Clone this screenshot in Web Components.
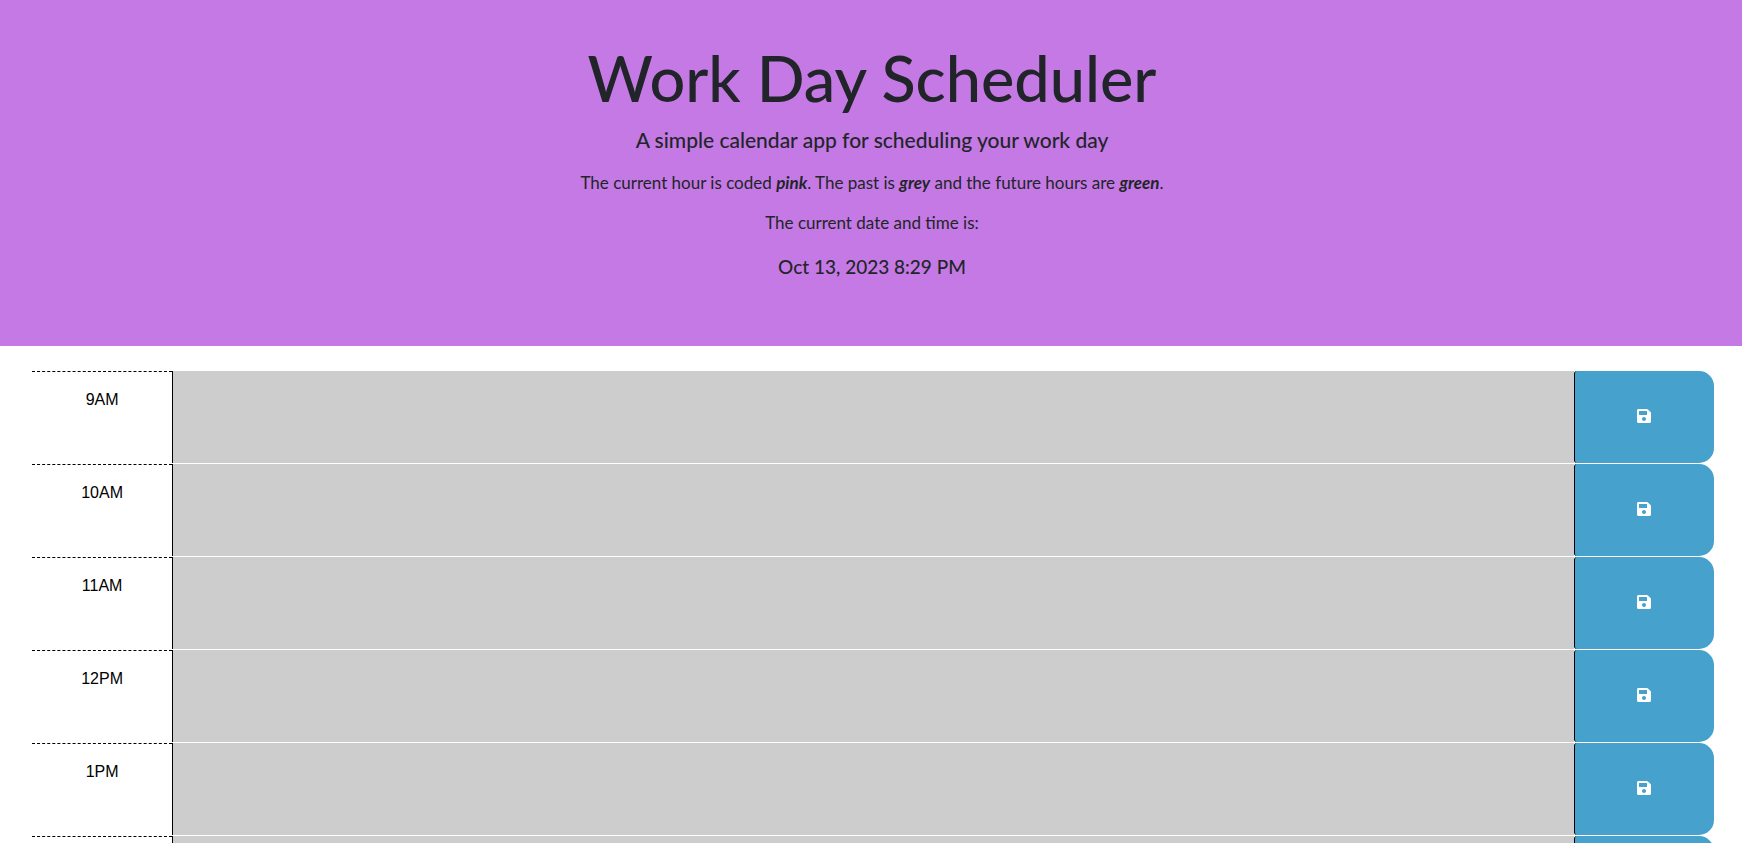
<!DOCTYPE html>
<html lang="en">
<head>
<meta charset="utf-8">
<title>Work Day Scheduler</title>
<style>
  html { scrollbar-width: none; }
  body { margin: 0; background: #fff; color: #212529; }
</style>
</head>
<body>
<scheduler-header>
  <span slot="title">Work Day Scheduler</span>
  <span slot="lead">A simple calendar app for scheduling your work day</span>
  <span slot="date">Oct 13, 2023 8:29 PM</span>
</scheduler-header>
<scheduler-board>
  <time-block hour="9AM"></time-block>
  <time-block hour="10AM"></time-block>
  <time-block hour="11AM"></time-block>
  <time-block hour="12PM"></time-block>
  <time-block hour="1PM"></time-block>
  <time-block hour="2PM"></time-block>
</scheduler-board>

<template id="header-template">
  <style>
    :host { display: block; }
    header {
      padding: 40px 16px 63px 18px;
      background: #c579e4;
      text-align: center;
      font-family: "Trebuchet MS", Lato, sans-serif;
      font-size: 17px;
      line-height: 24px;
    }
    h1 { margin: 0 0 9px; font-size: 63px; line-height: 76px; font-weight: 500; }
    p { margin: 0 0 16px; }
    .lead { font-size: 21px; line-height: 30px; font-weight: 500; }
    .date { margin: 0; font-size: 19px; line-height: 32px; font-weight: 500; }
    em { font-weight: 700; }
  </style>
  <header>
    <h1><slot name="title"></slot></h1>
    <p class="lead"><slot name="lead"></slot></p>
    <p>The current hour is coded <em>pink</em>. The past is <em>grey</em> and the future hours are <em>green</em>.</p>
    <p>The current date and time is:</p>
    <p class="date"><slot name="date"></slot></p>
  </header>
</template>

<template id="board-template">
  <style>
    :host { display: block; padding: 25px 28px 25px 32px; }
  </style>
  <main><slot></slot></main>
</template>

<template id="block-template">
  <style>
    :host {
      display: grid;
      grid-template-columns: minmax(0, 1fr) minmax(0, 10fr) minmax(0, 1fr);
      grid-auto-rows: 92px;
      border-bottom: 1px solid #fff;
      font: 16px/24px "Liberation Sans", Arial, sans-serif;
    }
    label {
      padding-top: 16px;
      border-top: 1px dashed #000;
      color: #000;
      text-align: center;
    }
    textarea {
      box-sizing: border-box;
      width: 100%;
      height: 100%;
      margin: 0;
      padding: 0 8px;
      border: 0;
      border-left: 1px solid #000;
      border-radius: 0;
      background: #cdcdcd;
      color: #000;
      font: inherit;
      resize: none;
      outline: none;
    }
    button {
      box-sizing: border-box;
      display: flex;
      align-items: center;
      justify-content: center;
      width: 100%;
      height: 100%;
      margin: 0;
      padding: 0 0 2px;
      border: 0;
      border-left: 1px solid #000;
      border-radius: 3px 15px 15px 3px;
      background: #46a1cc;
      color: #fff;
      cursor: pointer;
    }
    svg { display: block; width: 14px; height: 16px; fill: currentColor; }
  </style>
  <label for="note"></label>
  <textarea id="note"></textarea>
  <button type="button" aria-label="save">
    <svg viewBox="0 0 448 512" aria-hidden="true"><path d="M433.941 129.941l-83.882-83.882A48 48 0 0 0 316.118 32H48C21.49 32 0 53.49 0 80v352c0 26.51 21.49 48 48 48h352c26.51 0 48-21.49 48-48V163.882a48 48 0 0 0-14.059-33.941zM224 416c-35.346 0-64-28.654-64-64 0-35.346 28.654-64 64-64s64 28.654 64 64c0 35.346-28.654 64-64 64zm96-304.52V212c0 6.627-5.373 12-12 12H76c-6.627 0-12-5.373-12-12V108c0-6.627 5.373-12 12-12h228.52c3.183 0 6.235 1.264 8.485 3.515l3.48 3.48A11.996 11.996 0 0 1 320 111.48z"/></svg>
  </button>
</template>

<script>
  class TemplateElement extends HTMLElement {
    constructor() {
      super();
      const template = document.getElementById(this.constructor.templateId);
      this.attachShadow({ mode: 'open' }).append(template.content.cloneNode(true));
    }
  }

  class SchedulerHeader extends TemplateElement {
    static templateId = 'header-template';
  }

  class SchedulerBoard extends TemplateElement {
    static templateId = 'board-template';
  }

  class TimeBlock extends TemplateElement {
    static templateId = 'block-template';
    connectedCallback() {
      this.shadowRoot.querySelector('label').textContent = this.getAttribute('hour');
    }
  }

  customElements.define('scheduler-header', SchedulerHeader);
  customElements.define('scheduler-board', SchedulerBoard);
  customElements.define('time-block', TimeBlock);
</script>
</body>
</html>
